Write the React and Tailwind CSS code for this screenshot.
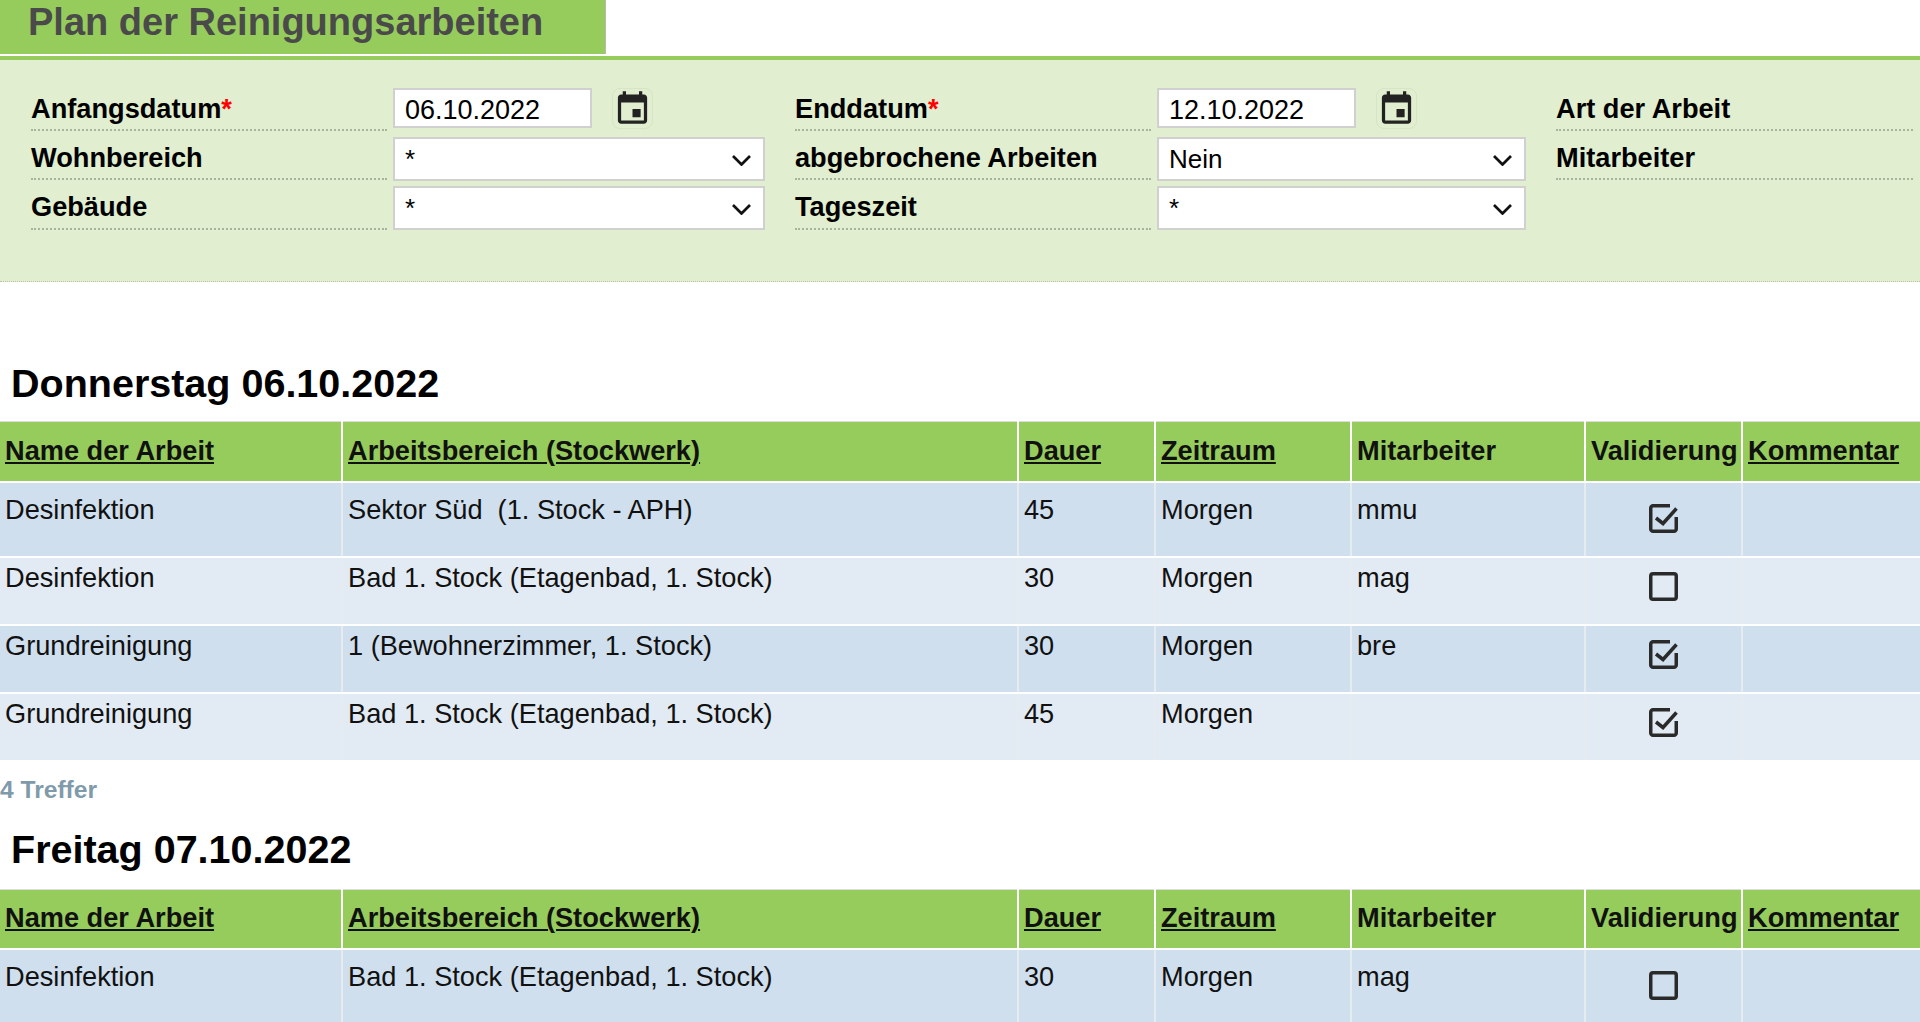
const COLS = [342, 676, 137, 196, 234, 157, 178];

const HEADERS = [
  { label: "Name der Arbeit", link: true },
  { label: "Arbeitsbereich (Stockwerk)", link: true },
  { label: "Dauer", link: true },
  { label: "Zeitraum", link: true },
  { label: "Mitarbeiter" },
  { label: "Validierung" },
  { label: "Kommentar", link: true },
];

const DAY_1 = [
  { name: "Desinfektion", area: "Sektor Süd \u00a0(1. Stock - APH)", min: 45, time: "Morgen", who: "mmu", done: true },
  { name: "Desinfektion", area: "Bad 1. Stock (Etagenbad, 1. Stock)", min: 30, time: "Morgen", who: "mag", done: false },
  { name: "Grundreinigung", area: "1 (Bewohnerzimmer, 1. Stock)", min: 30, time: "Morgen", who: "bre", done: true },
  { name: "Grundreinigung", area: "Bad 1. Stock (Etagenbad, 1. Stock)", min: 45, time: "Morgen", who: "", done: true },
];

const DAY_2 = [
  { name: "Desinfektion", area: "Bad 1. Stock (Etagenbad, 1. Stock)", min: 30, time: "Morgen", who: "mag", done: false },
];

function CalendarIcon() {
  return (
    <svg viewBox="0 0 24 24" className="w-[40px] h-[40px] fill-[#222]">
      <path d="M17 12h-5v5h5v-5zM16 1v2H8V1H6v2H5c-1.11 0-1.99.9-1.99 2L3 19c0 1.1.89 2 2 2h14c1.1 0 2-.9 2-2V5c0-1.1-.9-2-2-2h-1V1h-2zm3 18H5V8h14v11z" />
    </svg>
  );
}

function CheckIcon({ checked }) {
  return (
    <svg viewBox="0 0 29 29" className="w-[29px] h-[29px] fill-none stroke-[#2a2a2a] stroke-[3.5]">
      {checked ? (
        <>
          <path d="M27.25 13v12a2.25 2.25 0 0 1-2.25 2.25h-21a2.25 2.25 0 0 1-2.25-2.25v-21a2.25 2.25 0 0 1 2.25-2.25h17" />
          <path d="M7 14l7 5.5L27.5 4.5" />
        </>
      ) : (
        <rect x="1.75" y="1.75" width="25.5" height="25.5" rx="2.25" />
      )}
    </svg>
  );
}

function Label({ children, required }) {
  return (
    <div className="flex items-start pt-[11px] border-b-2 border-dotted border-[#aab39c] font-bold text-black leading-[31px]">
      <span>
        {children}
        {required && <span className="text-[#f00]">*</span>}
      </span>
    </div>
  );
}

function DateField({ value }) {
  return (
    <div className="flex items-start gap-[20px] pt-[6px]">
      <input
        defaultValue={value}
        className="w-[199px] h-[40px] bg-white border-2 border-[#d0d0d0] pl-[10px] pt-[4px] text-[27px] text-black outline-none"
      />
      <button className="w-[41px] h-[41px] flex items-center justify-center rounded-lg border border-[#d7e4c6]">
        <CalendarIcon />
      </button>
    </div>
  );
}

function SelectField({ value, options, className = "" }) {
  return (
    <div className={`relative flex items-end ${className}`}>
      <select
        defaultValue={value}
        className="w-full h-[44px] appearance-none bg-white border-2 border-[#d0d0d0] pl-[10px] text-[26px] text-black outline-none"
      >
        {options.map((o) => (
          <option key={o}>{o}</option>
        ))}
      </select>
      <svg
        viewBox="0 0 19 11"
        className="absolute right-[14px] bottom-[15px] w-[19px] h-[11px] fill-none stroke-[#111] stroke-[2.75]"
      >
        <path d="M1 1l8.5 8.5L18 1" />
      </svg>
    </div>
  );
}

function DayTable({ rows }) {
  return (
    <table className="w-full table-fixed border-collapse">
      <colgroup>
        {COLS.map((w, i) => (
          <col key={i} style={{ width: w }} />
        ))}
      </colgroup>
      <thead>
        <tr className="h-[60px] bg-[#96cc5c] border-t border-[#dddddd]">
          {HEADERS.map((h) => (
            <th
              key={h.label}
              className="border-r-2 last:border-r-0 border-b-2 border-white px-[5px] text-left font-bold whitespace-nowrap"
            >
              {h.link ? <a className="underline decoration-2 underline-offset-2">{h.label}</a> : h.label}
            </th>
          ))}
        </tr>
      </thead>
      <tbody>
        {rows.map((r, i) => {
          const bg = i % 2 === 0 ? "bg-[#cfdfee]" : "bg-[#e2eaf3]";
          const pad = i === 0 ? "pt-[7px]" : "pt-0";
          const cell = `border-r-2 last:border-r-0 border-r-[#e6ebf0] border-b-2 border-b-white px-[5px] align-top ${pad}`;
          return (
            <tr key={i} className={`${bg} ${i === 0 ? "h-[75px]" : "h-[68px]"}`}>
              <td className={cell}>{r.name}</td>
              <td className={cell}>{r.area}</td>
              <td className={cell}>{r.min}</td>
              <td className={cell}>{r.time}</td>
              <td className={cell}>{r.who}</td>
              <td className={`${cell} text-center`}>
                <div className="flex justify-center pt-[14px]">
                  <CheckIcon checked={r.done} />
                </div>
              </td>
              <td className={cell}></td>
            </tr>
          );
        })}
      </tbody>
    </table>
  );
}

export default function App() {
  return (
    <div className="h-[1022px] overflow-hidden bg-white font-['Liberation_Sans',Arial,sans-serif] text-[27.2px] text-[#111]">
      {/* Title */}
      <div className="h-[54px] w-[606px] bg-[#96cc5c] border-r border-[#b9b9b9] pl-[28px] font-bold text-[38px] leading-[44px] text-[#4a4a4a]">
        Plan der Reinigungsarbeiten
      </div>
      <div className="mt-[2px] h-[4px] bg-[#96cc5c]" />

      {/* Filter */}
      <div className="h-[222px] bg-[#e1eecf] border-b border-dotted border-[#b9c2ab] pl-[31px] pt-[22px] flex gap-[30px]">
        <div className="grid grid-cols-[356px_372px] grid-rows-[49px_49px_50px] gap-x-[6px]">
          <Label required>Anfangsdatum</Label>
          <DateField value="06.10.2022" />
          <Label>Wohnbereich</Label>
          <SelectField value="*" options={["*"]} className="-mb-[1px]" />
          <Label>Gebäude</Label>
          <SelectField value="*" options={["*"]} />
        </div>
        <div className="grid grid-cols-[356px_369px] grid-rows-[49px_49px_50px] gap-x-[6px]">
          <Label required>Enddatum</Label>
          <DateField value="12.10.2022" />
          <Label>abgebrochene Arbeiten</Label>
          <SelectField value="Nein" options={["Nein", "Ja"]} className="-mb-[1px]" />
          <Label>Tageszeit</Label>
          <SelectField value="*" options={["*"]} />
        </div>
        <div className="w-[357px] grid auto-rows-[49px]">
          <Label>Art der Arbeit</Label>
          <Label>Mitarbeiter</Label>
        </div>
      </div>

      {/* Results */}
      <h2 className="mt-[78px] mb-[15px] pl-[11px] font-bold text-[39.5px] leading-[46px] text-black">
        Donnerstag 06.10.2022
      </h2>
      <DayTable rows={DAY_1} />
      <div className="mt-[14px] font-bold text-[24.6px] leading-[28px] text-[#7f9bab]">4 Treffer</div>
      <h2 className="mt-[22px] mb-[17px] pl-[11px] font-bold text-[39.5px] leading-[46px] text-black">
        Freitag 07.10.2022
      </h2>
      <DayTable rows={DAY_2} />
    </div>
  );
}
